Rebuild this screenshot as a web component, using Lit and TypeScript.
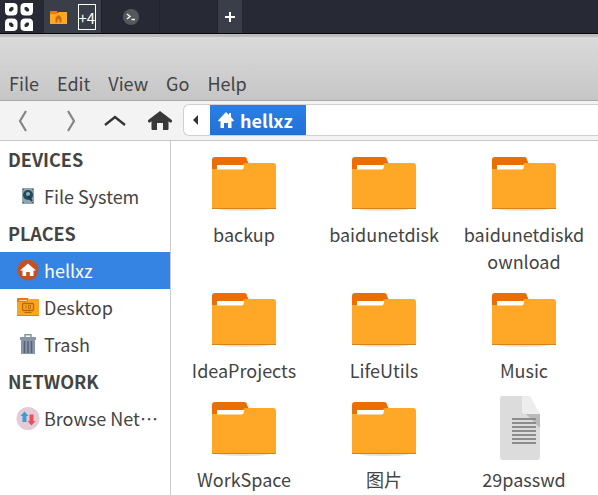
import { LitElement, html, css, svg } from "lit";
import { customElement, property } from "lit/decorators.js";

const folder = svg`
  <svg viewBox="0 0 64 64" width="64" height="64" aria-hidden="true">
    <ellipse cx="32" cy="58" rx="25" ry="2" fill="#e9dfd0"/>
    <path d="M0 20V9q0-3 3-3h29q3 0 3 3l2 4v12H0z" fill="#ea6e04"/>
    <path d="M0 18h29q2 0 2-3t3-3h27q3 0 3 3v43H0z" fill="#ffa726"/>
    <path d="M5 14h27q0 4-2 4.500H5z" fill="#fff"/>
    <path d="M0 57h64v1H0z" fill="#cf8420"/>
  </svg>`;

const documentIcon = svg`
  <svg viewBox="0 0 64 64" width="64" height="64" aria-hidden="true">
    <path d="M10 0h20l18 18v43q0 3-3 3H11q-3 0-3-3V3q0-3 2-3z" fill="#dcdcdc"/>
    <path d="M30 0h8l10 18H33q-3 0-3-3z" fill="#ededed"/>
    <path d="M34 18h14v14z" fill="#b9b9b9"/>
    <path d="M20 23h24M20 27h24M20 31h24M20 35h24M20 39h24M20 43h24M20 47h24" stroke="#8b8b8b" stroke-width="2"/>
  </svg>`;

const icons = {
  disk: svg`
    <svg viewBox="0 0 24 24" width="24" height="24" aria-hidden="true">
      <path d="M6 3h12v16H6z" fill="#90a4ae"/>
      <circle cx="12" cy="10" r="5" fill="#234b5b"/>
      <circle cx="12" cy="9" r="2" fill="#8fb3bd"/>
      <path d="M12 11l4 5" stroke="#173a48" stroke-width="2"/>
      <path d="M7 4h1v1H7zM16 4h1v1h-1zM7 17h1v1H7zM16 17h1v1h-1z" fill="#40525a"/>
    </svg>`,
  home: svg`
    <svg viewBox="0 0 24 24" width="24" height="24" aria-hidden="true">
      <circle cx="12" cy="11" r="10.500" fill="#c8501e"/>
      <path d="M12 4.500l8 7h-2.500V17h-3.700v-4h-3.600v4H6.500v-5.500H4z" fill="#fff"/>
    </svg>`,
  desktop: svg`
    <svg viewBox="0 0 24 24" width="24" height="24" aria-hidden="true">
      <path d="M1 3q0-1 1-1h10l1 3v5H1z" fill="#e87908"/>
      <path d="M3 4h8v1H3z" fill="#ffd9a0"/>
      <path d="M1 6h10l2-3h9q1 0 1 1v16H1z" fill="#fba41d"/>
      <path d="M1 19h22v1H1z" fill="#d88717"/>
      <rect x="6.500" y="7.500" width="11" height="7" rx="1" fill="none" stroke="#b86708" stroke-width="1.300"/>
      <path d="M8.500 16.500h7M10 9.500v3M12.500 9.500h2v3h-2z" fill="none" stroke="#b86708"/>
    </svg>`,
  trash: svg`
    <svg viewBox="0 0 24 24" width="24" height="24" aria-hidden="true">
      <path d="M9 4V1.700h6V4" fill="none" stroke="#8995a8" stroke-width="1.500"/>
      <path d="M4 4h16v3H4z" fill="#8995a8"/>
      <path d="M5 7h14v14H5z" fill="#8995a8"/>
      <path d="M8.500 8v12M12 8v12M15.500 8v12" stroke="#566175" stroke-width="1.500"/>
    </svg>`,
  network: svg`
    <svg viewBox="0 0 24 24" width="24" height="24" aria-hidden="true">
      <circle cx="12" cy="11.500" r="11.500" fill="#e3ccd5"/>
      <path d="M8.500 4.500L12.500 9H10.500v6h-4V9h-2z" fill="#3b9bdc"/>
      <path d="M15.500 18.500L11.500 14h2V7.500h4V14h2z" fill="#e8505c"/>
    </svg>`,
};

@customElement("place-link")
class PlaceLink extends LitElement {
  @property() icon = "disk";
  @property({ type: Boolean }) current = false;

  static styles = css`
    :host { display: block; }
    .place {
      display: flex; align-items: center; gap: 4px; height: 37px;
      padding: 0 8px 0 16px; color: #444; text-decoration: none;
    }
    .current { background: #3584e4; color: #fff; }
    svg { flex: none; display: block; }
    .name { flex: 1; min-width: 0; white-space: nowrap; overflow: hidden; }
  `;

  render() {
    return html`<a class="place ${this.current ? "current" : ""}" href="#">
      ${icons[this.icon as keyof typeof icons]}<span class="name"><slot></slot></span></a>`;
  }
}

@customElement("file-tile")
class FileTile extends LitElement {
  @property() kind = "folder";

  static styles = css`
    :host { display: block; }
    .tile {
      display: flex; flex-direction: column; align-items: center; gap: 6px;
      padding: 0 8px; color: #444; text-decoration: none;
    }
    svg { display: block; }
    .name { line-height: 27px; text-align: center; word-break: break-all; }
  `;

  render() {
    return html`<a class="tile" href="#">
      ${this.kind === "folder" ? folder : documentIcon}<span class="name"><slot></slot></span></a>`;
  }
}

const petal = "M0 0h8q4.500 0 4.500 4v4q0 4.500-4.500 4.500H4q-4 0-4-4.500zM4 7.500q0 1 1 1h1.500l2-2V5q0-1-1-1H6L4 6z";

@customElement("app-root")
class AppRoot extends LitElement {
  static styles = css`
    :host {
      display: flex; flex-direction: column; min-height: 100vh; background: #fff; color: #444;
      font: 18px/27px "Noto Sans CJK SC", "Noto Sans", sans-serif;
    }
    button { font: inherit; color: inherit; border: 0; padding: 0; background: none; }
    svg { display: block; flex: none; }
    .panel {
      display: flex; box-sizing: border-box; height: 34px;
      background: #272a34; border-bottom: 1px solid #07080b; color: #fff;
    }
    .launcher { width: 44px; padding-left: 5px; }
    .task { display: flex; align-items: center; justify-content: center; width: 58px; border-right: 1px solid #20232b; box-sizing: border-box; }
    .active { gap: 11px; background: #3a3e48; }
    .count { display: block; box-sizing: border-box; border: 1px solid #fff; width: 18px; height: 26px; font-size: 15px; line-height: 25px; }
    .add { display: flex; align-items: center; justify-content: center; width: 24px; background: #3a3e49; }
    .header {
      display: flex; align-items: flex-end; box-sizing: border-box; height: 67px; padding: 0 9px 3px; gap: 18px;
      background: linear-gradient(#dadada, #c6c6c6); border-top: 3px solid #bcbcbc; border-bottom: 1px solid #a9a9a9;
    }
    .toolbar { display: flex; align-items: center; box-sizing: border-box; height: 40px; background: #f3f3f3; border-bottom: 1px solid #c8c8c8; }
    .tool { display: flex; align-items: center; justify-content: center; width: 46px; height: 38px; }
    .path {
      display: flex; flex: 1; box-sizing: border-box; height: 32px; margin: 0 0 1px -1px;
      background: #fff; border: 1px solid #d0d0d0; border-right: 0; border-radius: 6px 0 0 6px;
    }
    .prev { display: flex; align-items: center; justify-content: center; width: 26px; }
    .crumb {
      display: flex; align-items: center; gap: 6px; padding: 0 13px 0 8px;
      background: linear-gradient(#2c80e4, #2070d9); color: #fff; font-weight: 700;
    }
    .body { display: flex; flex: 1; }
    .sidebar { width: 170px; flex: none; border-right: 1px solid #ccc; }
    .heading { margin: 0; padding-left: 8px; font-size: 18px; line-height: 37px; font-weight: 700; }
    .files {
      flex: 1; display: grid; grid-template-columns: repeat(auto-fill, 140px);
      align-content: start; row-gap: 12px; padding: 10px 0 0 3px;
    }
  `;

  render() {
    return html`
      <nav class="panel" aria-label="Panel">
        <button class="launcher" aria-label="Applications">
          <svg width="28" height="28" viewBox="0 0 28 28">
            <g fill="#fff" fill-rule="evenodd">
              <path d=${petal}/>
              <path d=${petal} transform="translate(28 0) scale(-1 1)"/>
              <path d=${petal} transform="translate(0 28) scale(1 -1)"/>
              <path d=${petal} transform="translate(28 28) scale(-1 -1)"/>
            </g>
          </svg>
        </button>
        <button class="task active" aria-label="File manager windows">
          <svg width="17" height="14" viewBox="0 0 17 14">
            <path d="M0 1h7l1 2v4H0z" fill="#ef7a08"/>
            <path d="M0 4h7l2-2h8v12H0z" fill="#ffa726"/>
            <path d="M8.500 5l3 2.500v5H9.500v-3h-2v3h-2v-5z" fill="#c96a08"/>
          </svg>
          <span class="count">+4</span>
        </button>
        <button class="task" aria-label="Terminal">
          <svg width="16" height="16" viewBox="0 0 16 16">
            <circle cx="8" cy="8" r="8" fill="#55585a"/>
            <path d="M4 5l3 2.500L4 10M8.500 10.500H12" fill="none" stroke="#eee" stroke-width="1.500"/>
          </svg>
        </button>
        <button class="task" aria-label="Empty workspace"></button>
        <button class="add" aria-label="Add workspace">
          <svg width="10" height="10" viewBox="0 0 10 10"><path d="M5 0v10M0 5h10" stroke="#fff" stroke-width="2"/></svg>
        </button>
      </nav>
      <header class="header">
        ${["File", "Edit", "View", "Go", "Help"].map((name) => html`<button>${name}</button>`)}
      </header>
      <div class="toolbar">
        <button class="tool" aria-label="Back">
          <svg width="12" height="22" viewBox="0 0 12 22"><path d="M9 1L3 11l6 10" fill="none" stroke="#858585" stroke-width="2.200"/></svg>
        </button>
        <button class="tool" aria-label="Forward">
          <svg width="12" height="22" viewBox="0 0 12 22"><path d="M5 1l6 10L5 21" fill="none" stroke="#858585" stroke-width="2.200"/></svg>
        </button>
        <button class="tool" aria-label="Up">
          <svg width="22" height="12" viewBox="0 0 22 12"><path d="M1 10l10-8 10 8" fill="none" stroke="#333" stroke-width="2.400"/></svg>
        </button>
        <button class="tool" aria-label="Home">
          <svg width="26" height="22" viewBox="0 0 26 22">
            <path d="M1.500 11L12 3l10.500 8" fill="none" stroke="#383838" stroke-width="3" stroke-linecap="round"/>
            <path d="M12 3l8.500 7v9q0 1-1 1H15v-7H9v7H4.500q-1 0-1-1v-9z" fill="#383838"/>
          </svg>
        </button>
        <nav class="path" aria-label="Location">
          <button class="prev" aria-label="Scroll path">
            <svg width="8" height="10" viewBox="0 0 8 10"><path d="M5 0v10L0 5z" fill="#333"/></svg>
          </button>
          <button class="crumb">
            <svg width="16" height="16" viewBox="0 0 16 16">
              <path d="M8 0l3 3V1h2v4l3 3.500-1 1L13.500 9v7H10v-5H6v5H2.500V9L1 9.500l-1-1z" fill="#fff"/>
            </svg>
            hellxz
          </button>
        </nav>
      </div>
      <div class="body">
        <nav class="sidebar" aria-label="Places">
          <h2 class="heading">DEVICES</h2>
          <place-link icon="disk">File System</place-link>
          <h2 class="heading">PLACES</h2>
          <place-link icon="home" current>hellxz</place-link>
          <place-link icon="desktop">Desktop</place-link>
          <place-link icon="trash">Trash</place-link>
          <h2 class="heading">NETWORK</h2>
          <place-link icon="network" lang="zh-CN">Browse Net…</place-link>
        </nav>
        <main class="files">
          ${["backup", "baidunetdisk", "baidunetdiskdownload", "IdeaProjects", "LifeUtils", "Music", "WorkSpace", "图片"].map(
            (name) => html`<file-tile>${name}</file-tile>`,
          )}
          <file-tile kind="document">29passwd</file-tile>
        </main>
      </div>
    `;
  }
}
